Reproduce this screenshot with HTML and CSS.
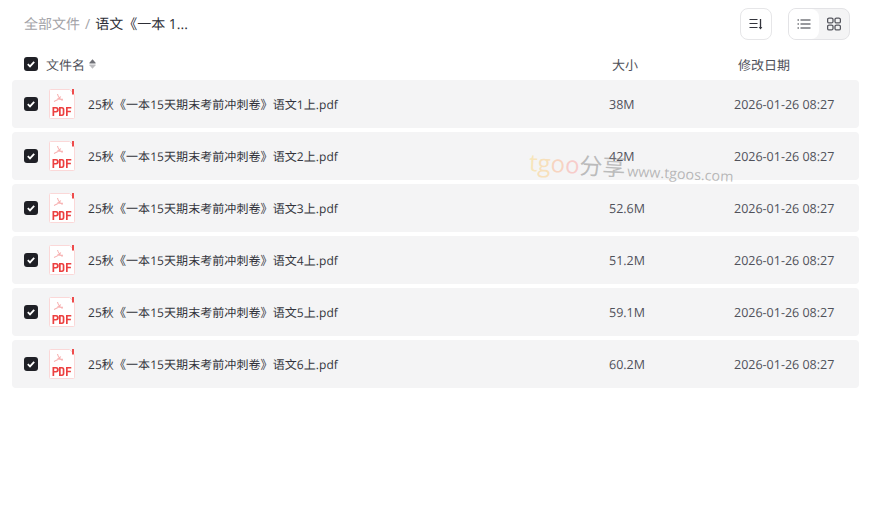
FILE: index.html
```html
<!DOCTYPE html>
<html lang="zh-CN">
<head>
<meta charset="utf-8">
<title>语文</title>
<link rel="stylesheet" href="styles.css">
</head>
<body>
<svg class="defs" width="0" height="0" aria-hidden="true">
  <defs>
    <symbol id="check" viewBox="0 0 14 14"><path d="M3.800 7.200 6 9.400l4.200-4.600" fill="none" stroke="#fff" stroke-width="1.800"/></symbol>
    <symbol id="pdf" viewBox="0 0 26 30">
      <path d="M1.500.5h19l5 5v23a1 1 0 0 1-1 1h-23a1 1 0 0 1-1-1v-27a1 1 0 0 1 1-1z" fill="#fff" stroke="#fbd8d8"/>
      <path d="M23 0h2v5.500h-2z" fill="#ee4b4b"/>
      <path d="M8.500 5c.6 2.600 2 4.800 5 6.400M5 12.500c2.600-.8 5-2.300 6.800-5M8.500 9.500c1.500.6 3.500 1 5.500.8" fill="none" stroke="#f7b0b0" stroke-width="1.100"/>
      <path d="M3.500 27v-9h3.500a2 2 0 0 1 0 5.500H5.200V27zM5.200 19.500v2.500h1.500a1.200 1.200 0 0 0 0-2.500zM10 18h3c1.600 0 2.400 1 2.400 2.400v4.200c0 1.400-.8 2.400-2.400 2.400h-3zM11.700 19.500v6h1.100c.6 0 .9-.4.900-1v-4c0-.6-.3-1-.9-1zM17 18h5.300v1.600h-3.600v2.200h3.200v1.500h-3.200V27H17z" fill="#ec4040"/>
    </symbol>
  </defs>
</svg>

<main class="page">
  <header class="top">
    <nav class="crumbs">
      <span class="crumb-root">全部文件</span>
      <span class="crumb-sep">/</span>
      <span class="crumb-now">语文《一本 1...</span>
    </nav>
    <div class="tools">
      <button class="tool" aria-label="排序">
        <svg width="14" height="14" viewBox="0 0 14 14"><path d="M.5 2.500h8M.5 6.500h8M.5 10.500h8" stroke="#33343c" stroke-width="1.200" fill="none"/><path d="M11.500 2v9.500" stroke="#33343c" stroke-width="1.300"/><path d="M9.700 10h3.600l-1.800 2.500z" fill="#33343c"/></svg>
      </button>
      <div class="switch">
        <button class="seg" aria-label="列表">
          <svg width="14" height="14" viewBox="0 0 14 14"><path d="M3.500 3h10M3.500 7h10M3.500 11h10" stroke="#33343c" stroke-width="1.100" fill="none"/><path d="M.5 3h1.500M.5 7h1.500M.5 11h1.500" stroke="#33343c" stroke-width="1.100" fill="none"/></svg>
        </button>
        <button class="seg seg-on" aria-label="网格">
          <svg width="14" height="14" viewBox="0 0 14 14" fill="none" stroke="#55565e" stroke-width="1.300"><rect x=".6" y="1.100" width="5.400" height="4.800" rx="1.500"/><rect x="8" y="1.100" width="5.400" height="4.800" rx="1.500"/><rect x=".6" y="8.100" width="5.400" height="4.800" rx="1.500"/><rect x="8" y="8.100" width="5.400" height="4.800" rx="1.500"/></svg>
        </button>
      </div>
    </div>
  </header>

  <div class="head">
    <span class="box"><svg width="14" height="14"><use href="#check"/></svg></span>
    <span class="head-name">文件名<svg class="sort" width="7" height="10" viewBox="0 0 7 10"><path d="M3.500.3 6.600 3.800a.5.5 0 0 1-.4.800H.8a.5.5 0 0 1-.4-.8z" fill="#6f7076"/><path d="M3.500 9.700.4 6.200a.5.5 0 0 1 .4-.8h5.400a.5.5 0 0 1 .4.800z" fill="#bcbcbf"/></svg></span>
    <span class="head-size">大小</span>
    <span class="head-date">修改日期</span>
  </div>

  <ul class="list">
    <li class="row">
      <span class="box"><svg width="14" height="14"><use href="#check"/></svg></span>
      <svg class="file" width="26" height="30"><use href="#pdf"/></svg>
      <span class="name">25秋《一本15天期末考前冲刺卷》语文1上.pdf</span>
      <span class="size">38M</span>
      <span class="date">2026-01-26 08:27</span>
    </li>
    <li class="row">
      <span class="box"><svg width="14" height="14"><use href="#check"/></svg></span>
      <svg class="file" width="26" height="30"><use href="#pdf"/></svg>
      <span class="name">25秋《一本15天期末考前冲刺卷》语文2上.pdf</span>
      <span class="size">42M</span>
      <span class="date">2026-01-26 08:27</span>
    </li>
    <li class="row">
      <span class="box"><svg width="14" height="14"><use href="#check"/></svg></span>
      <svg class="file" width="26" height="30"><use href="#pdf"/></svg>
      <span class="name">25秋《一本15天期末考前冲刺卷》语文3上.pdf</span>
      <span class="size">52.6M</span>
      <span class="date">2026-01-26 08:27</span>
    </li>
    <li class="row">
      <span class="box"><svg width="14" height="14"><use href="#check"/></svg></span>
      <svg class="file" width="26" height="30"><use href="#pdf"/></svg>
      <span class="name">25秋《一本15天期末考前冲刺卷》语文4上.pdf</span>
      <span class="size">51.2M</span>
      <span class="date">2026-01-26 08:27</span>
    </li>
    <li class="row">
      <span class="box"><svg width="14" height="14"><use href="#check"/></svg></span>
      <svg class="file" width="26" height="30"><use href="#pdf"/></svg>
      <span class="name">25秋《一本15天期末考前冲刺卷》语文5上.pdf</span>
      <span class="size">59.1M</span>
      <span class="date">2026-01-26 08:27</span>
    </li>
    <li class="row">
      <span class="box"><svg width="14" height="14"><use href="#check"/></svg></span>
      <svg class="file" width="26" height="30"><use href="#pdf"/></svg>
      <span class="name">25秋《一本15天期末考前冲刺卷》语文6上.pdf</span>
      <span class="size">60.2M</span>
      <span class="date">2026-01-26 08:27</span>
    </li>
  </ul>

  <div class="mark">
    <span class="mark-t">t</span><span class="mark-g">g</span><span class="mark-o1">o</span><span class="mark-o2">o</span><span class="mark-cn">分享</span><span class="mark-url">www.tgoos.com</span>
  </div>
</main>
</body>
</html>
```

FILE: styles.css
```css
* { box-sizing: border-box; }
html, body { margin: 0; padding: 0; background: #fff; }
body {
  font-family: "Open Sans", "Noto Sans CJK SC", sans-serif;
  color: #33343c;
  font-size: 13px;
  text-rendering: geometricPrecision;
  overflow: hidden;
}
.defs { position: absolute; }
.page { position: relative; width: 874px; height: 514px; padding: 8px 15px 0 12px; }

.top { display: flex; justify-content: space-between; align-items: center; height: 32px; padding-left: 12px; }
.crumbs { display: flex; align-items: center; font-size: 14px; gap: 5px; }
.crumb-root { color: #a3a3a8; }
.crumb-sep { color: #a3a3a8; }
.crumb-now { color: #2d2e36; }
.tools { display: flex; gap: 16px; margin-right: 9px; }
button { padding: 0; background: none; border: 0; display: flex; align-items: center; justify-content: center; }
.tool { width: 32px; height: 32px; border: 1px solid #e6e6e8; border-radius: 8px; }
.switch { display: flex; width: 62px; height: 32px; border: 1px solid #e3e3e6; border-radius: 8px; overflow: hidden; background: #f4f4f5; }
.seg { flex: 1; }
.seg:first-child { background: #fff; border-radius: 0 8px 8px 0; }

.head { display: flex; align-items: center; height: 32px; margin-top: 8px; padding-left: 12px; color: #50515a; }
.box { flex: none; width: 14px; height: 14px; background: #1f2026; border-radius: 3px; display: flex; }
.head-name { display: flex; align-items: center; margin-left: 8px; width: 566px; }
.sort { margin-left: 4px; flex: none; }
.head-size { width: 126px; }

.list { list-style: none; margin: 0; padding: 0; display: flex; flex-direction: column; gap: 4px; }
.row { display: flex; align-items: center; height: 48px; padding-left: 12px; background: #f4f4f5; border-radius: 4px; }
.file { margin-left: 11px; flex: none; }
.name { margin-left: 13px; width: 521px; font-size: 12px; letter-spacing: .07px; }
.size { width: 125px; font-size: 12.500px; color: #50515a; }
.date { font-size: 12.500px; color: #50515a; }

.mark {
  position: absolute; left: 529px; top: 146px;
  display: flex; align-items: baseline; white-space: nowrap;
  transform: rotate(3deg); transform-origin: left center;
  font-size: 24px; line-height: 32px; pointer-events: none;
}
.mark-t { color: rgba(250, 215, 130, .5); }
.mark-g { color: rgba(250, 205, 130, .5); }
.mark-o1 { color: rgba(250, 180, 140, .5); }
.mark-o2 { color: rgba(250, 165, 160, .5); }
.mark-cn { color: rgba(130, 130, 130, .5); font-size: 23px; }
.mark-url { color: rgba(130, 130, 130, .55); font-size: 14.300px; margin-left: 2px; }
```
